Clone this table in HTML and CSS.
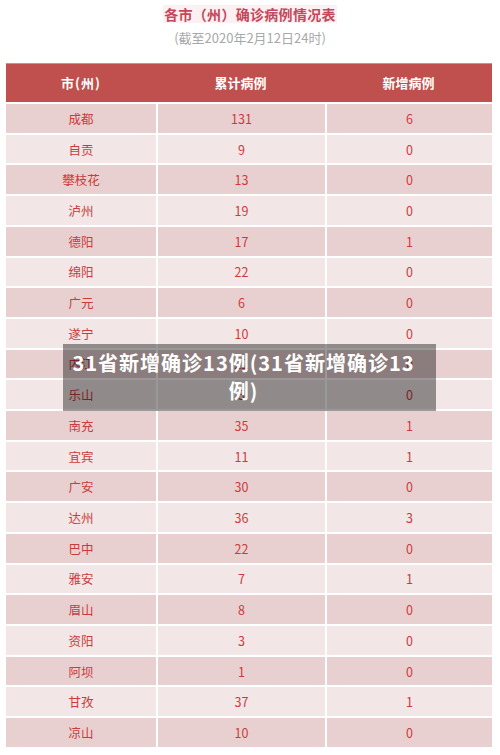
FILE: index.html
```html
<!DOCTYPE html>
<html lang="zh">
<head>
<meta charset="utf-8">
<title>各市（州）确诊病例情况表</title>
<link rel="stylesheet" href="styles.css">
</head>
<body>
<div class="page">
  <div class="head">
    <div class="title">各市（州）确诊病例情况表</div>
    <div class="sub">(截至2020年2月12日24时)</div>
  </div>
  <div class="table">
    <div class="thead">
      <div>市(州)</div><div>累计病例</div><div>新增病例</div>
    </div>
    <div class="row dark"><div>成都</div><div>131</div><div>6</div></div>
    <div class="row"><div>自贡</div><div>9</div><div>0</div></div>
    <div class="row dark"><div>攀枝花</div><div>13</div><div>0</div></div>
    <div class="row"><div>泸州</div><div>19</div><div>0</div></div>
    <div class="row dark"><div>德阳</div><div>17</div><div>1</div></div>
    <div class="row"><div>绵阳</div><div>22</div><div>0</div></div>
    <div class="row dark"><div>广元</div><div>6</div><div>0</div></div>
    <div class="row"><div>遂宁</div><div>10</div><div>0</div></div>
    <div class="row dark"><div>内江</div><div>22</div><div>0</div></div>
    <div class="row"><div>乐山</div><div>3</div><div>0</div></div>
    <div class="row dark"><div>南充</div><div>35</div><div>1</div></div>
    <div class="row"><div>宜宾</div><div>11</div><div>1</div></div>
    <div class="row dark"><div>广安</div><div>30</div><div>0</div></div>
    <div class="row"><div>达州</div><div>36</div><div>3</div></div>
    <div class="row dark"><div>巴中</div><div>22</div><div>0</div></div>
    <div class="row"><div>雅安</div><div>7</div><div>1</div></div>
    <div class="row dark"><div>眉山</div><div>8</div><div>0</div></div>
    <div class="row"><div>资阳</div><div>3</div><div>0</div></div>
    <div class="row dark"><div>阿坝</div><div>1</div><div>0</div></div>
    <div class="row"><div>甘孜</div><div>37</div><div>1</div></div>
    <div class="row dark"><div>凉山</div><div>10</div><div>0</div></div>
  </div>
  <div class="overlay">31省新增确诊13例(31省新增确诊13例)</div>
</div>
</body>
</html>
```

FILE: styles.css
```css
html, body {
  margin: 0;
  padding: 0;
  background: #ffffff;
}
body {
  font-family: "Noto Sans CJK SC", "Noto Sans", sans-serif;
}
.page {
  position: relative;
  width: 500px;
  height: 755px;
  overflow: hidden;
}
.head {
  height: 63px;
  display: flex;
  flex-direction: column;
  align-items: center;
}
.title {
  margin-top: 5px;
  height: 18px;
  line-height: 18px;
  padding: 0 1px;
  background: #fcf1f2;
  color: #c4485a;
  font-size: 14px;
  font-weight: bold;
  letter-spacing: 0.3px;
}
.sub {
  margin-top: 6px;
  color: #a8a8a8;
  font-size: 13px;
  line-height: 17px;
}
.table {
  margin-left: 6px;
  width: 486px;
  display: flex;
  flex-direction: column;
}
.thead {
  height: 39px;
  background: #c0504d;
  display: grid;
  grid-template-columns: 150px 169px 167px;
  align-items: center;
  text-align: center;
  color: #ffffff;
  font-size: 13px;
  font-weight: bold;
  box-shadow: inset 0 1px 0 #d98a88;
}
.thead > div:first-child {
  letter-spacing: 1px;
}
.row {
  margin-top: 2px;
  height: 28.71px;
  display: grid;
  grid-template-columns: 150px 167px 165px;
  column-gap: 2px;
  text-align: center;
  color: #cc3b3b;
  font-size: 12.5px;
}
.row > div {
  background: #f2e6e6;
  display: flex;
  align-items: center;
  justify-content: center;
}
.row.dark > div {
  background: #e8d0d0;
}
.overlay {
  position: absolute;
  left: 63px;
  top: 344px;
  width: 373px;
  height: 67px;
  box-sizing: border-box;
  padding: 5px 20px 0 8px;
  background: rgba(0, 0, 0, 0.4);
  color: #ffffff;
  font-size: 20px;
  font-weight: bold;
  line-height: 28px;
  letter-spacing: 1px;
  text-align: center;
}
```
